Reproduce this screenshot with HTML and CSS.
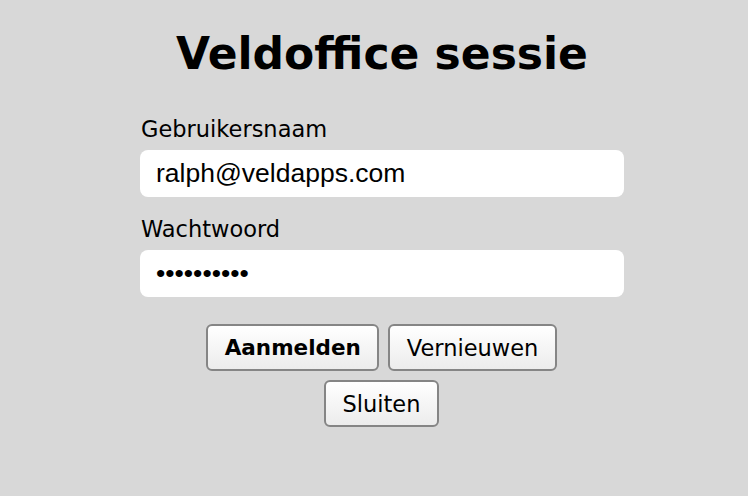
FILE: index.html
```html
<!DOCTYPE html>
<html lang="nl">
<head>
<meta charset="utf-8">
<title>Veldoffice sessie</title>
<link rel="stylesheet" href="styles.css">
</head>
<body>
<main class="page">
  <h1 class="title">Veldoffice sessie</h1>
  <form class="form">
    <label class="label" for="user">Gebruikersnaam</label>
    <input class="field" id="user" type="text" value="ralph@veldapps.com">
    <label class="label" for="pass">Wachtwoord</label>
    <input class="field" id="pass" type="password" value="abcdefghij">
    <div class="actions">
      <div class="row">
        <button type="button" class="btn btn-primary">Aanmelden</button>
        <button type="button" class="btn">Vernieuwen</button>
      </div>
      <div class="row">
        <button type="button" class="btn">Sluiten</button>
      </div>
    </div>
  </form>
</main>
</body>
</html>
```
FILE: styles.css
```css
html, body {
  margin: 0;
  padding: 0;
  background: #d8d8d8;
}
body {
  font-family: "DejaVu Sans", sans-serif;
  color: #000;
}
.page {
  display: flex;
  flex-direction: column;
  align-items: center;
  padding: 24px 0 0 16px;
}
.title {
  margin: 0;
  font-size: 44px;
  font-weight: bold;
  line-height: 60px;
}
.form {
  width: 484px;
  display: flex;
  flex-direction: column;
  margin-top: 32px;
}
.label {
  font-size: 22.5px;
  line-height: 26px;
  padding-left: 1px;
  margin-bottom: 8px;
}
.field {
  box-sizing: border-box;
  height: 47px;
  width: 484px;
  border: none;
  border-radius: 8px;
  background: #fff;
  padding: 0 16px;
  font-family: "Liberation Sans", Arial, sans-serif;
  font-size: 26.5px;
  color: #000;
  outline: none;
  margin-bottom: 19px;
}
.actions {
  display: flex;
  flex-direction: column;
  align-items: center;
  gap: 9px;
  margin-top: 8px;
  margin-left: -1px;
}
.row {
  display: flex;
  gap: 9px;
}
.btn {
  height: 47px;
  padding: 0 16.5px;
  border: 2px solid #858585;
  border-radius: 6px;
  background: linear-gradient(#ffffff, #ececec);
  font-family: "DejaVu Sans", sans-serif;
  font-size: 22.5px;
  color: #000;
}
.btn-primary {
  font-weight: bold;
  font-size: 21.5px;
}
```
